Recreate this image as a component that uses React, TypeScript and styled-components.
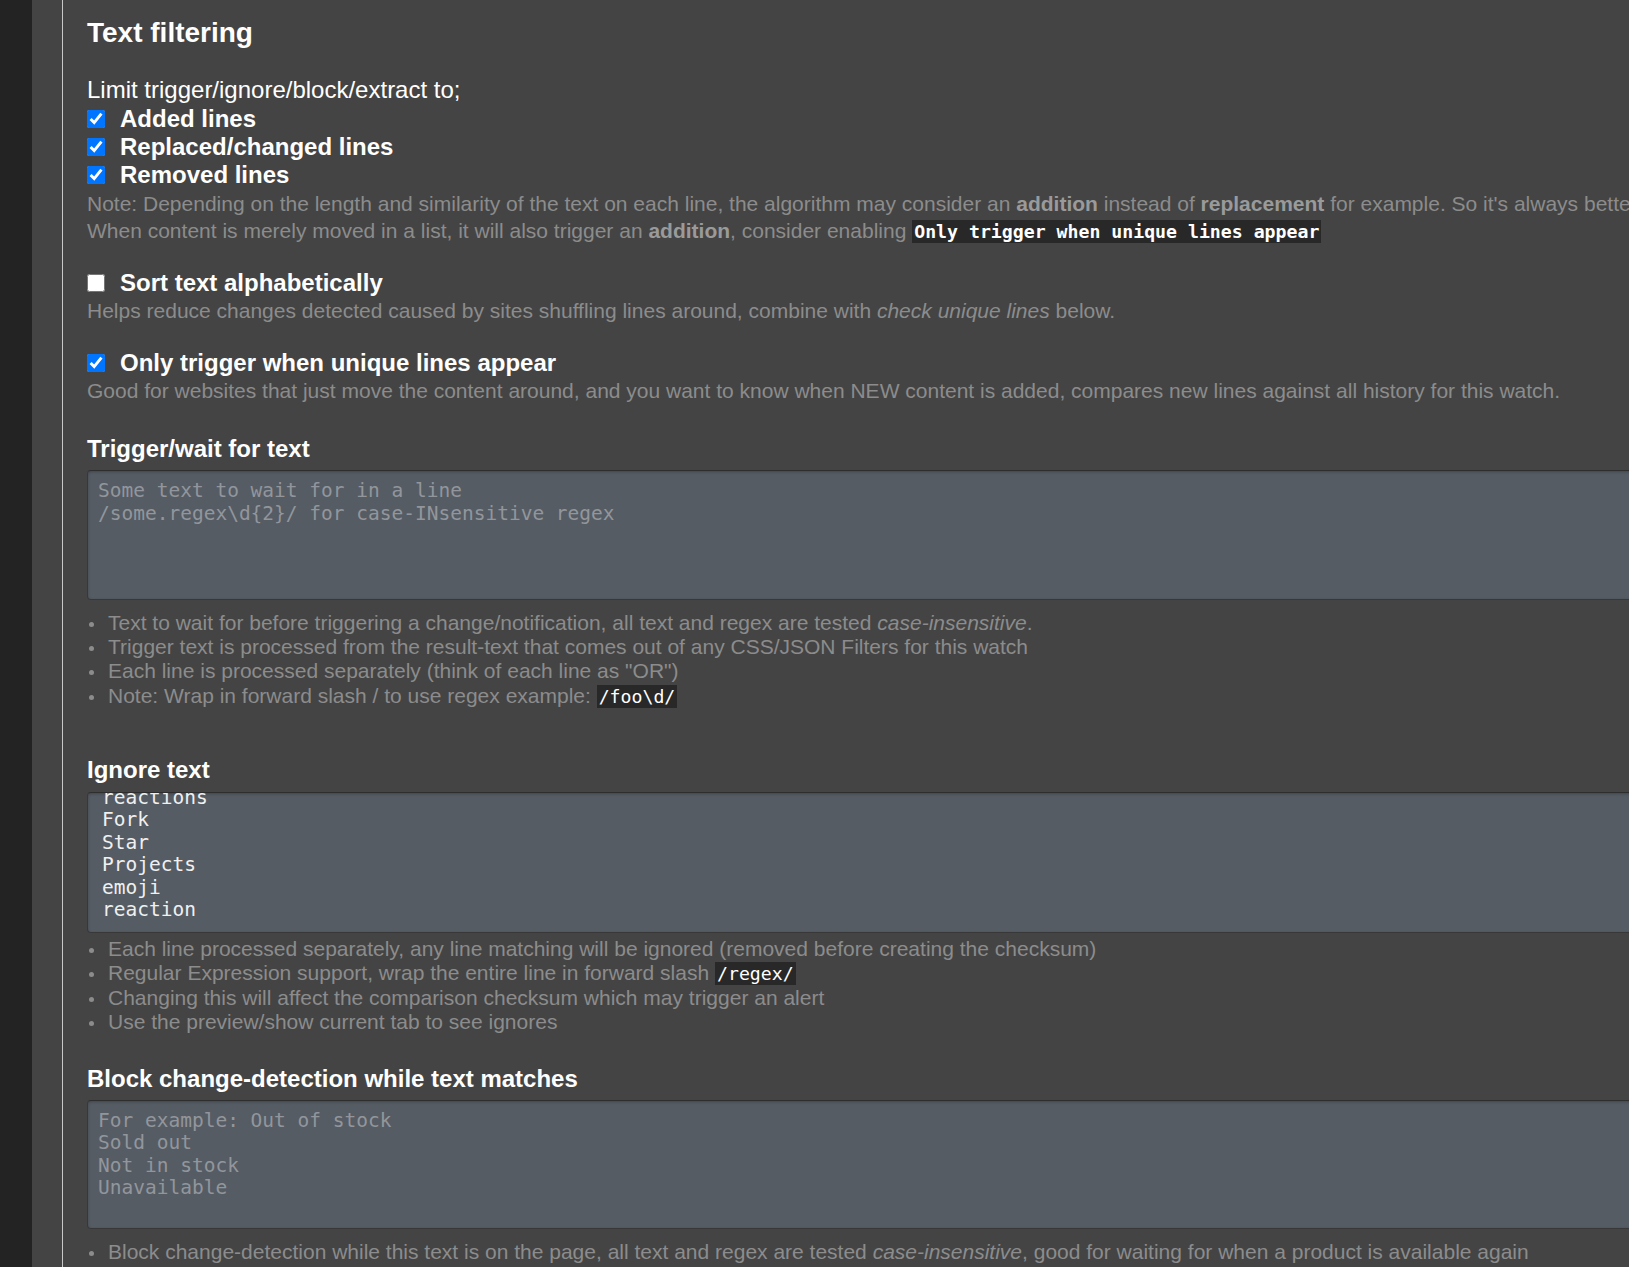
import React, { useLayoutEffect, useRef } from 'react';
import styled, { createGlobalStyle } from 'styled-components';

const GlobalStyle = createGlobalStyle`
  html, body {
    margin: 0;
    padding: 0;
    overflow: hidden;
    background: #444;
  }
  body {
    font-family: "Liberation Sans", Arial, sans-serif;
    color: #fff;
  }
`;

const Page = styled.div`
  display: flex;
  min-height: 1267px;
  width: 2400px;
`;

const LeftStrip = styled.div`
  width: 32px;
  flex-shrink: 0;
  background: #232323;
`;

const Gutter = styled.div`
  width: 30px;
  flex-shrink: 0;
  background: #444;
  border-right: 1px solid #c8c8c8;
`;

const Content = styled.div`
  flex: 1;
  padding: 17px 0 0 24px;
`;

const Title = styled.h3`
  margin: 0;
  font-size: 28px;
  line-height: 32px;
  font-weight: bold;
`;

const Intro = styled.div`
  margin: 27px 0 1px;
  font-size: 24px;
  line-height: 28px;
`;

const CheckRow = styled.label`
  display: flex;
  align-items: center;
  height: 28px;
  font-size: 24px;
  font-weight: bold;
  color: #fff;
`;

const Box = styled.input`
  width: 18px;
  height: 18px;
  margin: 0 15px 0 0;
`;

const Note = styled.div<{ $top?: number }>`
  margin-top: ${(p) => p.$top ?? 0}px;
  font-size: 21px;
  line-height: 27px;
  color: #8c8c8c;
  white-space: nowrap;

  strong {
    color: #9a9a9a;
  }
`;

const Option = styled.div<{ $top: number }>`
  margin-top: ${(p) => p.$top}px;
`;

const Code = styled.code<{ $bold?: boolean }>`
  font-family: "DejaVu Sans Mono", monospace;
  font-size: 18.2px;
  font-weight: ${(p) => (p.$bold ? 'bold' : 'normal')};
  background: #282828;
  color: #fff;
  padding: 1px 2px;
`;

const Field = styled.div<{ $top: number }>`
  margin-top: ${(p) => p.$top}px;
`;

const FieldLabel = styled.div`
  font-size: 24px;
  line-height: 28px;
  font-weight: bold;
  color: #fff;
`;

const TextBox = styled.textarea<{ $h: number; $gap: number; $indent?: number }>`
  display: block;
  box-sizing: border-box;
  width: 100%;
  height: ${(p) => p.$h}px;
  margin-top: ${(p) => p.$gap}px;
  padding: 9px 10px 7px ${(p) => p.$indent ?? 10}px;
  background: #565c64;
  color: #f0f0f0;
  border: 1px solid #383838;
  border-top-color: #2e2e2e;
  border-radius: 4px;
  box-shadow: inset 0 1px 3px rgba(0, 0, 0, 0.25);
  font-family: "DejaVu Sans Mono", monospace;
  font-size: 19.5px;
  line-height: 22.5px;
  resize: none;
  overflow: hidden;
  outline: none;

  &::placeholder {
    color: #92969c;
  }
`;

const Hints = styled.ul<{ $top: number }>`
  list-style: none;
  margin: ${(p) => p.$top}px 0 0;
  padding: 0;
  font-size: 21px;
  line-height: 24.2px;
  color: #8c8c8c;
  white-space: nowrap;
`;

const Hint = styled.li`
  padding-left: 2px;

  &::before {
    content: '';
    display: inline-block;
    width: 5px;
    height: 5px;
    border-radius: 50%;
    background: #8c8c8c;
    margin-right: 14px;
    vertical-align: middle;
  }
`;

const ignoreText = [
  'Watch',
  'Issues',
  'reactions',
  'Fork',
  'Star',
  'Projects',
  'emoji',
  'reaction',
  '',
].join('\n');

const ScrolledBox: React.FC<{ value: string; scroll: number; h: number; gap: number; indent: number }> = ({
  value,
  scroll,
  h,
  gap,
  indent,
}) => {
  const ref = useRef<HTMLTextAreaElement>(null);
  useLayoutEffect(() => {
    if (ref.current) ref.current.scrollTop = scroll;
  }, [scroll]);
  return <TextBox ref={ref} $h={h} $gap={gap} $indent={indent} defaultValue={value} spellCheck={false} />;
};

const App: React.FC = () => {
  return (
    <>
      <GlobalStyle />
      <Page>
        <LeftStrip />
        <Gutter />
        <Content>
          <Title>Text filtering</Title>
          <Intro>Limit trigger/ignore/block/extract to;</Intro>
          <CheckRow>
            <Box type="checkbox" defaultChecked />
            Added lines
          </CheckRow>
          <CheckRow>
            <Box type="checkbox" defaultChecked />
            Replaced/changed lines
          </CheckRow>
          <CheckRow>
            <Box type="checkbox" defaultChecked />
            Removed lines
          </CheckRow>
          <Note $top={1}>
            Note: Depending on the length and similarity of the text on each line, the algorithm may consider an{' '}
            <strong>addition</strong> instead of <strong>replacement</strong> for example. So it's always better to
            select <strong>Added</strong>+<strong>Replaced</strong> when you're interested in new content.
            <br />
            When content is merely moved in a list, it will also trigger an <strong>addition</strong>, consider
            enabling <Code $bold>Only trigger when unique lines appear</Code>
          </Note>

          <Option $top={24}>
            <CheckRow>
              <Box type="checkbox" />
              Sort text alphabetically
            </CheckRow>
            <Note>
              Helps reduce changes detected caused by sites shuffling lines around, combine with{' '}
              <i>check unique lines</i> below.
            </Note>
          </Option>

          <Option $top={25}>
            <CheckRow>
              <Box type="checkbox" defaultChecked />
              Only trigger when unique lines appear
            </CheckRow>
            <Note>
              Good for websites that just move the content around, and you want to know when NEW content is added,
              compares new lines against all history for this watch.
            </Note>
          </Option>

          <Field $top={31}>
            <FieldLabel>Trigger/wait for text</FieldLabel>
            <TextBox
              $h={130}
              $gap={7}
              placeholder={'Some text to wait for in a line\n/some.regex\\d{2}/ for case-INsensitive regex'}
            />
            <Hints $top={11}>
              <Hint>
                Text to wait for before triggering a change/notification, all text and regex are tested{' '}
                <i>case-insensitive</i>.
              </Hint>
              <Hint>Trigger text is processed from the result-text that comes out of any CSS/JSON Filters for this watch</Hint>
              <Hint>Each line is processed separately (think of each line as "OR")</Hint>
              <Hint>
                Note: Wrap in forward slash / to use regex example: <Code>/foo\d/</Code>
              </Hint>
            </Hints>
          </Field>

          <Field $top={47}>
            <FieldLabel>Ignore text</FieldLabel>
            <ScrolledBox value={ignoreText} scroll={60} h={141} gap={8} indent={14} />
            <Hints $top={4}>
              <Hint>Each line processed separately, any line matching will be ignored (removed before creating the checksum)</Hint>
              <Hint>
                Regular Expression support, wrap the entire line in forward slash <Code>/regex/</Code>
              </Hint>
              <Hint>Changing this will affect the comparison checksum which may trigger an alert</Hint>
              <Hint>Use the preview/show current tab to see ignores</Hint>
            </Hints>
          </Field>

          <Field $top={30}>
            <FieldLabel>Block change-detection while text matches</FieldLabel>
            <TextBox $h={129} $gap={7} placeholder={'For example: Out of stock\nSold out\nNot in stock\nUnavailable'} />
            <Hints $top={11}>
              <Hint>
                Block change-detection while this text is on the page, all text and regex are tested{' '}
                <i>case-insensitive</i>, good for waiting for when a product is available again
              </Hint>
              <Hint>Block text is processed from the result-text that comes out of any CSS/JSON Filters for this watch</Hint>
              <Hint>All lines here must not exist (think of each line as "OR")</Hint>
              <Hint>
                Note: Wrap in forward slash / to use regex example: <Code>/foo\d/</Code>
              </Hint>
            </Hints>
          </Field>
        </Content>
      </Page>
    </>
  );
};

export default App;
